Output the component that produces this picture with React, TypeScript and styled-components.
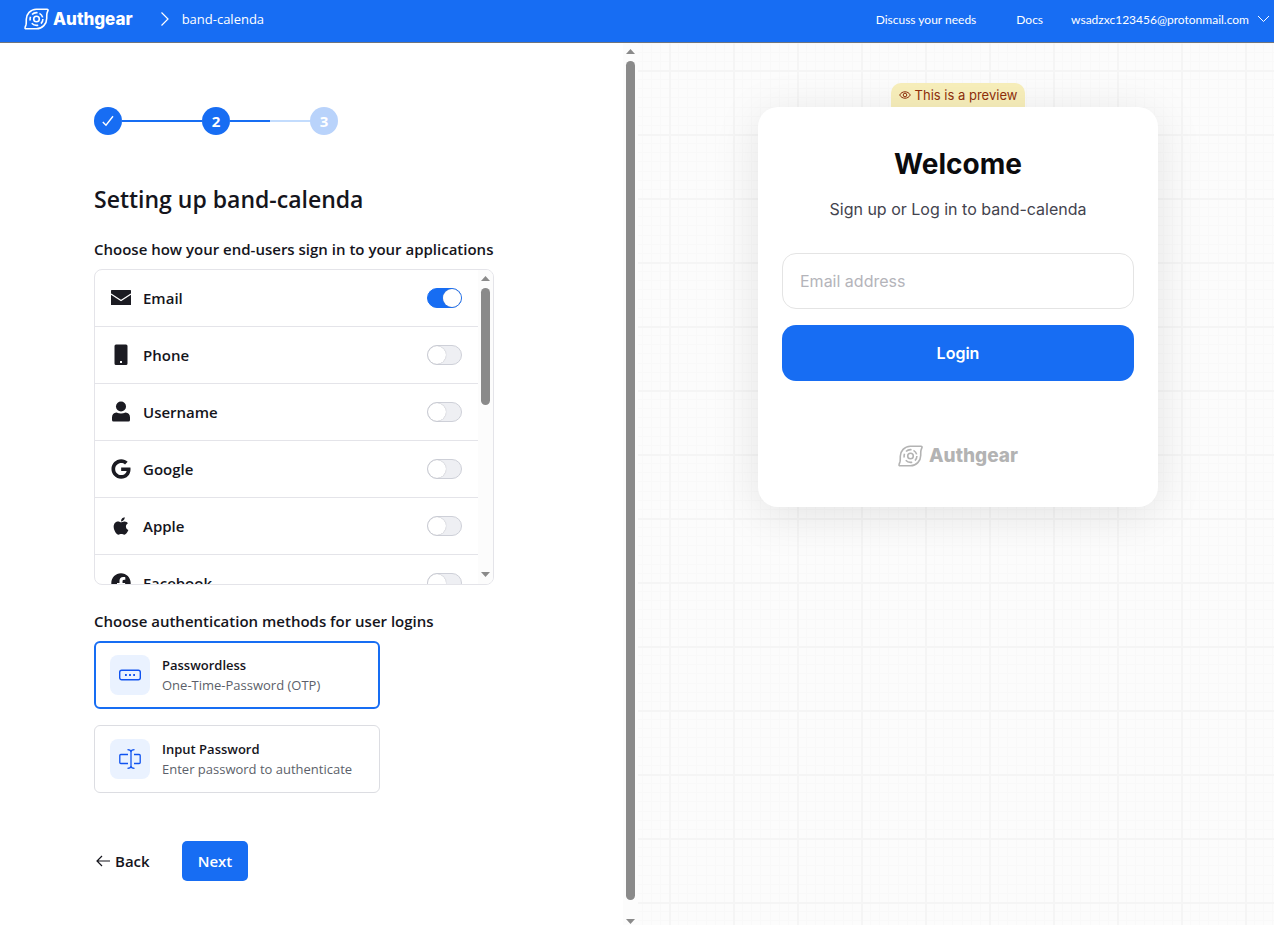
import React, { useState } from 'react';
import styled, { createGlobalStyle, css } from 'styled-components';
import { FaApple, FaFacebook, FaGoogle } from 'react-icons/fa';

const ui = `'Open Sans', 'Noto Sans', sans-serif`;
const inter = `Inter, 'Liberation Sans', sans-serif`;
const blue = '#176df3';
const ink = '#15151c';
const line = '#e4e4e9';
const thumb = '#8a8a8a';

const GlobalStyle = createGlobalStyle`
  * { box-sizing: border-box; }
  body { margin: 0; background: #fff; color: ${ink}; font-family: ${ui}; }
  button, input { font: inherit; color: inherit; }
  h1, h2, p, ul, fieldset, legend { margin: 0; padding: 0; border: 0; }
`;

const Page = styled.div`
  min-height: 100vh;
  display: flex;
  flex-direction: column;
`;

const Header = styled.header`
  display: flex;
  align-items: center;
  height: 43px;
  padding: 0 4px 4px 24px;
  background: ${blue};
  border-bottom: 1px solid #70757c;
  color: #fff;
`;

const BrandLink = styled.a`
  display: flex;
  color: #fff;
  text-decoration: none;
`;

const Brand = styled.span<{ $muted?: boolean }>`
  display: flex;
  align-items: center;
  justify-content: center;
  gap: ${(p) => (p.$muted ? 6 : 4)}px;
  height: 22px;
  font-family: ${inter};
  font-size: ${(p) => (p.$muted ? 19 : 17)}px;
  font-weight: 800;
  line-height: 22px;
  color: ${(p) => (p.$muted ? '#b3b3b3' : '#fff')};
`;

const Crumb = styled.div`
  display: flex;
  align-items: center;
  gap: 12px;
  flex: 1;
  margin-left: 27px;
  font-size: 13px;
`;

const HeaderNav = styled.nav`
  display: flex;
  align-items: center;
  font-family: Lato, sans-serif;
  font-size: 12px;
`;

const NavLink = styled.a`
  margin-right: 40px;
  color: #fff;
  text-decoration: none;
  & + & { margin-right: 28px; }
`;

const Account = styled.button`
  display: flex;
  align-items: center;
  gap: 8px;
  padding: 0;
  border: 0;
  background: none;
  color: #fff;
`;

const Main = styled.main`
  flex: 1;
  display: grid;
  grid-template-columns: calc(50% + 1px) 1fr;
`;

const SetupPane = styled.section`
  display: flex;
  justify-content: space-between;
`;

const Form = styled.form`
  display: flex;
  flex-direction: column;
  align-items: flex-start;
  padding: 64px 0 44px 94px;
`;

const Track = styled.div<{ $inset?: boolean }>`
  display: flex;
  flex-direction: column;
  align-items: center;
  justify-content: space-between;
  width: 15px;
  padding: ${(p) => (p.$inset ? '6px 0 7px' : '6px 0 1px')};
  background: #fcfcfc;
`;

const ThumbArea = styled.div`
  flex: 1;
  width: 9px;
  padding: 7px 0 19px;
`;

const Thumb = styled.div<{ $share: number }>`
  width: 9px;
  height: ${(p) => p.$share}%;
  border-radius: 5px;
  background: ${thumb};
`;

const Steps = styled.ol`
  display: flex;
  align-items: center;
  margin: 0;
  padding: 0;
  list-style: none;
`;

const Step = styled.li<{ $pending?: boolean }>`
  display: grid;
  place-items: center;
  width: 28px;
  height: 28px;
  border-radius: 50%;
  background: ${(p) => (p.$pending ? '#b9d3fb' : blue)};
  color: #fff;
  font-size: 15px;
  font-weight: 700;
`;

const Connector = styled.li<{ $half?: boolean }>`
  width: 80px;
  height: 2px;
  background: ${(p) =>
    p.$half ? `linear-gradient(90deg, ${blue} 50%, #c3dcfd 50%)` : blue};
`;

const Title = styled.h1`
  margin-top: 48px;
  font-size: 23px;
  font-weight: 600;
  line-height: 32px;
`;

const SectionLabel = styled.h2`
  margin: 24px 0 10px;
  font-size: 15px;
  font-weight: 600;
  line-height: 20px;
`;

const ProviderBox = styled.div`
  display: flex;
  width: 400px;
  height: 316px;
  margin-bottom: 2px;
  border: 1px solid ${line};
  border-radius: 8px;
  overflow: hidden;
`;

const ProviderList = styled.ul`
  flex: 1;
  overflow-y: auto;
  scrollbar-width: none;
  list-style: none;
`;

const ProviderRow = styled.li`
  border-bottom: 1px solid ${line};
`;

const ProviderLabel = styled.label`
  display: flex;
  align-items: center;
  gap: 12px;
  height: 56px;
  padding: 0 16px;
  font-size: 15px;
  font-weight: 600;
`;

const IconSlot = styled.span`
  display: grid;
  place-items: center;
  width: 20px;
  height: 22px;
  color: #1b1b22;
`;

const Toggle = styled.input`
  appearance: none;
  display: flex;
  width: 35px;
  height: 20px;
  margin: 0 0 0 auto;
  border: 1px solid #ced0d8;
  border-radius: 10px;
  background: #eeeff3;
  &::before {
    content: '';
    width: 18px;
    height: 18px;
    border-radius: 50%;
    background: #fff;
    box-shadow: 0 0 1px #9a9ca6;
  }
  &:checked {
    justify-content: flex-end;
    border-color: ${blue};
    background: ${blue};
  }
`;

const Methods = styled.fieldset`
  display: flex;
  flex-direction: column;
  gap: 16px;
  margin-bottom: 48px;
`;

const MethodCard = styled.label<{ $selected: boolean }>`
  display: flex;
  align-items: center;
  gap: 12px;
  width: 286px;
  height: 68px;
  padding: 0 15px;
  border: 1px solid #dcdde2;
  border-radius: 6px;
  ${(p) =>
    p.$selected &&
    css`
      padding: 0 14px;
      border: 2px solid ${blue};
    `}
`;

const HiddenRadio = styled.input`
  position: absolute;
  opacity: 0;
  pointer-events: none;
`;

const MethodIcon = styled.span`
  display: grid;
  place-items: center;
  width: 40px;
  height: 40px;
  border-radius: 8px;
  background: #eaf2ff;
  color: #1053f0;
`;

const MethodText = styled.span`
  display: flex;
  flex-direction: column;
  font-size: 13px;
  line-height: 20px;
`;

const MethodName = styled.span`
  font-weight: 600;
`;

const MethodNote = styled.span`
  color: #5c5f6a;
`;

const Actions = styled.div`
  display: flex;
  align-items: center;
  gap: 32px;
`;

const BackButton = styled.button`
  display: flex;
  align-items: center;
  gap: 5px;
  padding: 0 0 0 2px;
  border: 0;
  background: none;
  font-size: 15px;
  font-weight: 600;
`;

const NextButton = styled.button`
  height: 40px;
  padding: 0 16px;
  border: 0;
  border-radius: 5px;
  background: ${blue};
  color: #fff;
  font-size: 15px;
  font-weight: 600;
`;

const minorStops = (color: string) =>
  [9, 18, 27, 37, 46, 55]
    .map((n) => `transparent ${n}px, ${color} ${n}px, ${color} ${n + 1}px, transparent ${n + 1}px`)
    .join(', ');

const PreviewPane = styled.section`
  display: flex;
  flex-direction: column;
  align-items: center;
  padding: 40px 0 40px 4px;
  background-color: #fcfcfc;
  background-image:
    linear-gradient(90deg, #f5f5f5 2px, transparent 2px),
    linear-gradient(#f5f5f5 2px, transparent 2px),
    linear-gradient(90deg, ${minorStops('#f9f9f9')}),
    linear-gradient(${minorStops('#f9f9f9')});
  background-size: 64px 64px;
  background-position: 31px 27px;
  font-family: ${inter};
`;

const PreviewBadge = styled.p`
  display: flex;
  align-items: center;
  gap: 4px;
  height: 24px;
  padding: 0 8px;
  border-radius: 10px 10px 0 0;
  background: #f8efbb;
  color: #8f2f0c;
  font-size: 13px;
`;

const LoginCard = styled.div`
  display: flex;
  flex-direction: column;
  width: 400px;
  padding: 40px 24px;
  border-radius: 20px;
  background: #fff;
  box-shadow: 0 8px 48px rgba(0, 0, 0, 0.1);
`;

const Welcome = styled.h2`
  font-size: 28px;
  font-weight: 700;
  line-height: 34px;
  text-align: center;
  color: #0b0b0d;
`;

const Intro = styled.p`
  margin: 16px 0 32px;
  font-size: 16px;
  line-height: 24px;
  text-align: center;
  color: #43434e;
`;

const EmailInput = styled.input`
  width: 100%;
  height: 56px;
  padding: 0 17px;
  border: 1px solid #e4e4e4;
  border-radius: 14px;
  background: #fff;
  font-size: 16px;
  &::placeholder { color: #b4b4ba; opacity: 1; }
`;

const LoginButton = styled.button`
  height: 56px;
  margin: 16px 0 64px;
  border: 0;
  border-radius: 14px;
  background: ${blue};
  color: #fff;
  font-size: 16px;
  font-weight: 600;
`;

const GearMark = () => (
  <svg width="25" height="22" viewBox="0 0 25 22" fill="none" stroke="currentColor" strokeWidth="1.6" aria-hidden="true">
    <path d="M12.3 1.200H23a1 1 0 0 1 .9 1.500L23 5.200c-.4 1.400-.2 3-.3 5A10.300 10.300 0 0 1 12.500 20.800H2a1 1 0 0 1-.9-1.500L2 16.800c.4-1.400.2-3 .3-5A10.200 10.200 0 0 1 12.300 1.200Z" />
    <circle cx="12.5" cy="11" r="6.4" strokeDasharray="5 3 7 3 4 2.500 6 2" />
    <circle cx="12.5" cy="11" r="2.800" />
  </svg>
);

const ChevronRight = () => (
  <svg width="10" height="16" viewBox="0 0 10 16" fill="none" stroke="#fff" strokeWidth="1.2" aria-hidden="true">
    <path d="M1.5 1.5 8 8l-6.500 6.500" />
  </svg>
);

const ChevronDown = () => (
  <svg width="13" height="8" viewBox="0 0 13 8" fill="none" stroke="#fff" aria-hidden="true">
    <path d="m1 1 5.500 5.500L12 1" />
  </svg>
);

const Check = () => (
  <svg width="12" height="12" viewBox="0 0 12 12" fill="none" stroke="#fff" strokeWidth="1.4" aria-hidden="true">
    <path d="M.8 7 4 10.300 11 1.200" />
  </svg>
);

const Arrow = ({ down }: { down?: boolean }) => (
  <svg width="9" height="5" viewBox="0 0 9 5" fill={thumb} aria-hidden="true">
    <path d={down ? 'M0 0h9L4.500 5Z' : 'M0 5h9L4.500 0Z'} />
  </svg>
);

const MailIcon = () => (
  <svg width="20" height="16" viewBox="0 0 20 16" aria-hidden="true">
    <rect y="0" width="20" height="15" rx=".6" fill="currentColor" />
    <path d="M0 4 10 10.500 20 4" fill="none" stroke="#fff" strokeWidth="1.100" />
  </svg>
);

const PhoneIcon = () => (
  <svg width="14" height="22" viewBox="0 0 14 22" fill="currentColor" aria-hidden="true">
    <path fillRule="evenodd" d="M2 .5h10A1.500 1.500 0 0 1 13.500 2v17.500A1.500 1.500 0 0 1 12 21H2a1.500 1.500 0 0 1-1.500-1.500V2A1.500 1.500 0 0 1 2 .5ZM6 17v2h2v-2Z" />
  </svg>
);

const UserIcon = () => (
  <svg width="18" height="22" viewBox="0 0 18 22" fill="currentColor" aria-hidden="true">
    <circle cx="9" cy="5.500" r="5" />
    <path d="M4.500 11.500q4.500 1.800 9 0Q18 12 18 16.500V19a1.500 1.500 0 0 1-1.500 1.500h-15A1.500 1.500 0 0 1 0 19v-2.500Q0 12 4.500 11.500Z" />
  </svg>
);

const OtpIcon = () => (
  <svg width="24" height="24" viewBox="0 0 24 24" fill="none" stroke="currentColor" strokeWidth="1.4" aria-hidden="true">
    <rect x="1.700" y="7.200" width="20.600" height="9.600" rx="2" />
    <path d="M7 12h1.800M11.100 12h1.800M15.200 12H17" strokeWidth="1.800" />
  </svg>
);

const InputIcon = () => (
  <svg width="24" height="24" viewBox="0 0 24 24" fill="none" stroke="currentColor" strokeWidth="1.300" aria-hidden="true">
    <path d="M10 7.500H2.800a1 1 0 0 0-1 1v7a1 1 0 0 0 1 1H10M16 7.500h5.200a1 1 0 0 1 1 1v7a1 1 0 0 1-1 1H16" />
    <path d="M9.500 2.700c2.500 0 3.500.8 3.500 2.300v14c0 1.500-1 2.300-3.500 2.300M16.500 2.700C14 2.700 13 3.500 13 5v14c0 1.500 1 2.300 3.500 2.300" />
  </svg>
);

const BackArrow = () => (
  <svg width="14" height="12" viewBox="0 0 14 12" fill="none" stroke="currentColor" strokeWidth="1.200" aria-hidden="true">
    <path d="M14 6H1M6 1 1 6l5 5" />
  </svg>
);

const EyeIcon = () => (
  <svg width="12" height="10" viewBox="0 0 12 10" fill="none" stroke="currentColor" aria-hidden="true">
    <path d="M.7 5C3 .7 9 .7 11.300 5 9 9.300 3 9.300.7 5Z" />
    <circle cx="6" cy="5" r="1.800" />
  </svg>
);

const Scrollbar = ({ share, inset }: { share: number; inset?: boolean }) => (
  <Track $inset={inset} aria-hidden="true">
    <Arrow />
    <ThumbArea>
      <Thumb $share={share} />
    </ThumbArea>
    <Arrow down />
  </Track>
);

const providers = [
  { name: 'Email', icon: <MailIcon /> },
  { name: 'Phone', icon: <PhoneIcon /> },
  { name: 'Username', icon: <UserIcon /> },
  { name: 'Google', icon: <FaGoogle size={20} /> },
  { name: 'Apple', icon: <FaApple size={20} /> },
  { name: 'Facebook', icon: <FaFacebook size={20} /> },
];

const methods = [
  { name: 'Passwordless', note: 'One-Time-Password (OTP)', icon: <OtpIcon /> },
  { name: 'Input Password', note: 'Enter password to authenticate', icon: <InputIcon /> },
];

export default function App() {
  const [enabled, setEnabled] = useState<string[]>(['Email']);
  const [method, setMethod] = useState('Passwordless');

  const flip = (name: string) =>
    setEnabled((list) => (list.includes(name) ? list.filter((n) => n !== name) : [...list, name]));

  return (
    <Page>
      <GlobalStyle />
      <Header>
        <BrandLink href="#home">
          <Brand><GearMark />Authgear</Brand>
        </BrandLink>
        <Crumb><ChevronRight />band-calenda</Crumb>
        <HeaderNav>
          <NavLink href="#contact">Discuss your needs</NavLink>
          <NavLink href="#docs">Docs</NavLink>
          <Account type="button">wsadzxc123456@protonmail.com<ChevronDown /></Account>
        </HeaderNav>
      </Header>
      <Main>
        <SetupPane>
          <Form onSubmit={(e) => e.preventDefault()}>
            <Steps>
              <Step><Check /></Step>
              <Connector />
              <Step>2</Step>
              <Connector $half />
              <Step $pending>3</Step>
            </Steps>
            <Title>Setting up band-calenda</Title>
            <SectionLabel>Choose how your end-users sign in to your applications</SectionLabel>
            <ProviderBox>
              <ProviderList>
                {providers.map((p) => (
                  <ProviderRow key={p.name}>
                    <ProviderLabel>
                      <IconSlot>{p.icon}</IconSlot>
                      {p.name}
                      <Toggle
                        type="checkbox"
                        role="switch"
                        checked={enabled.includes(p.name)}
                        onChange={() => flip(p.name)}
                      />
                    </ProviderLabel>
                  </ProviderRow>
                ))}
              </ProviderList>
              <Scrollbar share={44} inset />
            </ProviderBox>
            <SectionLabel id="methods">Choose authentication methods for user logins</SectionLabel>
            <Methods aria-labelledby="methods">
              {methods.map((m) => (
                <MethodCard key={m.name} $selected={method === m.name}>
                  <HiddenRadio
                    type="radio"
                    name="method"
                    checked={method === m.name}
                    onChange={() => setMethod(m.name)}
                  />
                  <MethodIcon>{m.icon}</MethodIcon>
                  <MethodText>
                    <MethodName>{m.name}</MethodName>
                    <MethodNote>{m.note}</MethodNote>
                  </MethodText>
                </MethodCard>
              ))}
            </Methods>
            <Actions>
              <BackButton type="button"><BackArrow />Back</BackButton>
              <NextButton type="submit">Next</NextButton>
            </Actions>
          </Form>
          <Scrollbar share={100} />
        </SetupPane>
        <PreviewPane>
          <PreviewBadge><EyeIcon />This is a preview</PreviewBadge>
          <LoginCard>
            <Welcome>Welcome</Welcome>
            <Intro>Sign up or Log in to band-calenda</Intro>
            <EmailInput type="email" placeholder="Email address" aria-label="Email address" />
            <LoginButton type="button">Login</LoginButton>
            <Brand $muted><GearMark />Authgear</Brand>
          </LoginCard>
        </PreviewPane>
      </Main>
    </Page>
  );
}
